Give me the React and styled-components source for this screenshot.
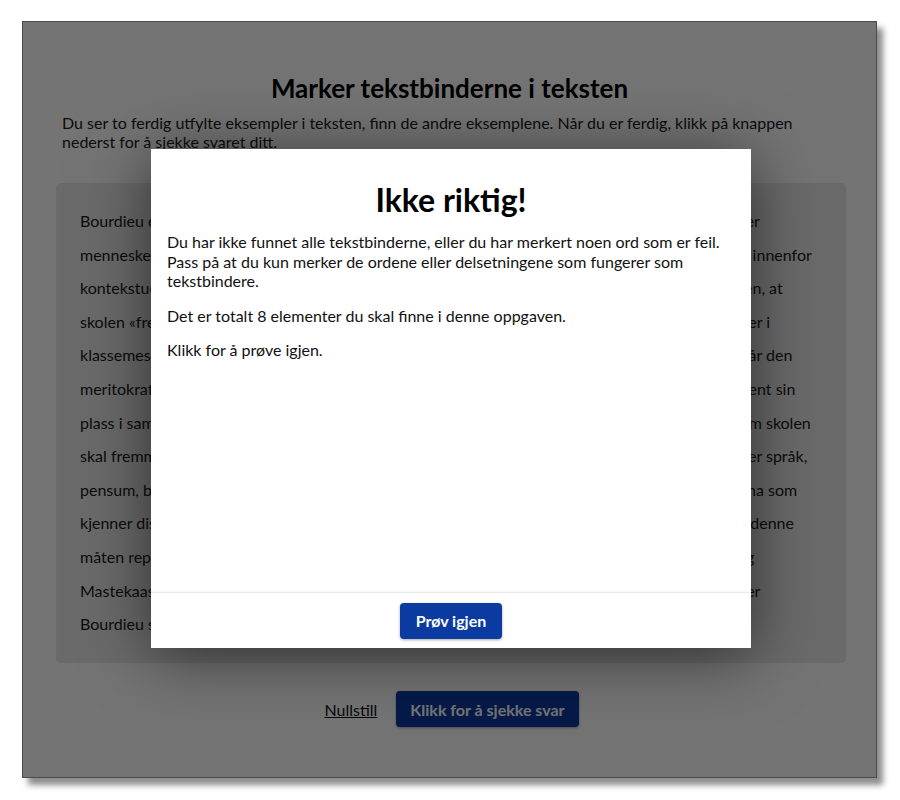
import React from "react";
import styled, { createGlobalStyle } from "styled-components";

const GlobalStyle = createGlobalStyle`
  * {
    box-sizing: border-box;
  }
  body {
    margin: 0;
    background: #fff;
    font-family: Lato, "Open Sans", sans-serif;
    color: #1a1a1a;
  }
`;

const Page = styled.div`
  padding: 21px 22px 30px 22px;
`;

const Card = styled.div`
  position: relative;
  width: 855px;
  height: 757px;
  background: #fff;
  border: 1px solid #4a4a4a;
  box-shadow: 6px 7px 6px rgba(0, 0, 0, 0.45);
  padding-top: 50px;
`;

const Title = styled.h1`
  margin: 0;
  text-align: center;
  font-size: 26px;
  line-height: 32px;
  font-weight: 700;
  color: #000;
`;

const Intro = styled.p`
  margin: 9px 40px 0 39px;
  font-size: 16px;
  line-height: 19px;
`;

const TextPanel = styled.div`
  margin: 32px 0 0 33px;
  width: 790px;
  height: 480px;
  background: #e8e8e8;
  border-radius: 5px;
  padding: 21px 24px;
  font-size: 16px;
  line-height: 33.6px;
  white-space: nowrap;
  overflow: hidden;
`;

const Actions = styled.div`
  display: flex;
  justify-content: center;
  align-items: center;
  gap: 19px;
  margin-top: 28px;
  padding-left: 4px;
`;

const LinkButton = styled.button`
  background: none;
  border: none;
  padding: 0;
  font: inherit;
  font-size: 16px;
  color: #111;
  text-decoration: underline;
  cursor: pointer;
`;

const PrimaryButton = styled.button`
  background: #0b3aa0;
  color: #fff;
  border: none;
  border-radius: 4px;
  height: 36px;
  padding: 0 ${(p) => p.$pad || 16}px;
  font-family: inherit;
  font-size: 16px;
  font-weight: 700;
  box-shadow: 0 1px 3px rgba(0, 0, 0, 0.35);
  cursor: pointer;
`;

const Overlay = styled.div`
  position: absolute;
  inset: 0;
  background: rgba(0, 0, 0, 0.545);
  display: flex;
  align-items: center;
  justify-content: center;
`;

const Dialog = styled.div`
  width: 600px;
  height: 499px;
  background: #fff;
  display: flex;
  flex-direction: column;
  margin-left: 3px;
  margin-top: -2px;
  box-shadow: 0 8px 60px rgba(0, 0, 0, 0.55);
`;

const DialogBody = styled.div`
  flex: 1;
  padding: 32px 16px 0 16px;
`;

const DialogTitle = styled.h2`
  margin: 0 0 13px 0;
  text-align: center;
  font-size: 32px;
  line-height: 38px;
  font-weight: 700;
  color: #000;
`;

const DialogText = styled.p`
  margin: 0 0 15px 0;
  font-size: 16px;
  line-height: 19.5px;
  color: #111;
`;

const DialogFooter = styled.div`
  height: 56px;
  border-top: 1px solid #ebebeb;
  box-shadow: 0 -1px 2px rgba(0, 0, 0, 0.04);
  display: flex;
  align-items: center;
  justify-content: center;
`;

const lines = [
  "Bourdieu er kjent for sin teori om kulturell kapital, og et av de aller viktigste poengene hos ham er",
  "menneskers bakgrunn og hvordan vi alle formes av de sosiale og kulturelle strukturen vi nå lever innenfor",
  "kontekstuelle rammer i samfunnet. Videre hevder han, i motsetning til den allmenne oppfatningen, at",
  "skolen «fremmer» de elevene som allerede har en bakgrunn som ligner på de kulturene man finner i",
  "klassemessig høyere lag, fordi skolen i stor grad er prega av middelklassens normer og verdier. Når den",
  "meritokratiske skolen forteller at den gir alle en rettferdig sjanse, slik at de aller flinkeste får fortjent sin",
  "plass i samfunnet. Og i virkeligheten er det i hovedsak middelklassens kultur, språk og verdier som skolen",
  "skal fremme, og dette er verdier som disse elevene allerede er svært fortrolige med når det gjelder språk,",
  "pensum, bøker, musikk og væremåten i klasserommet. Dermed blir det i stor grad de samme barna som",
  "kjenner disse koder godt fra før som lykkes best, og skolen bidrar dermed selv til å opprettholde denne",
  "måten reproduseres de sosiale og faglige forskjeller i samfunnet, fra generasjon til generasjon, og",
  "Mastekaasa viser i sin forsking at sosial bakgrunn fortsatt betyr mye i Norge, noe som jo bekrefter",
  "Bourdieu sine teorier om skolen.",
];

export default function App() {
  return (
    <Page>
      <GlobalStyle />
      <Card>
        <Title>Marker tekstbinderne i teksten</Title>
        <Intro>
          Du ser to ferdig utfylte eksempler i teksten, finn de andre eksemplene. Når du er ferdig,
          klikk på knappen nederst for å sjekke svaret ditt.
        </Intro>
        <TextPanel>
          {lines.map((line, i) => (
            <React.Fragment key={i}>
              {line}
              <br />
            </React.Fragment>
          ))}
        </TextPanel>
        <Actions>
          <LinkButton>Nullstill</LinkButton>
          <PrimaryButton $pad={14}>Klikk for å sjekke svar</PrimaryButton>
        </Actions>

        <Overlay>
          <Dialog role="dialog" aria-modal="true">
            <DialogBody>
              <DialogTitle>Ikke riktig!</DialogTitle>
              <DialogText>
                Du har ikke funnet alle tekstbinderne, eller du har merkert noen ord som er feil.
                Pass på at du kun merker de ordene eller delsetningene som fungerer som
                tekstbindere.
              </DialogText>
              <DialogText>Det er totalt 8 elementer du skal finne i denne oppgaven.</DialogText>
              <DialogText>Klikk for å prøve igjen.</DialogText>
            </DialogBody>
            <DialogFooter>
              <PrimaryButton>Prøv igjen</PrimaryButton>
            </DialogFooter>
          </Dialog>
        </Overlay>
      </Card>
    </Page>
  );
}
